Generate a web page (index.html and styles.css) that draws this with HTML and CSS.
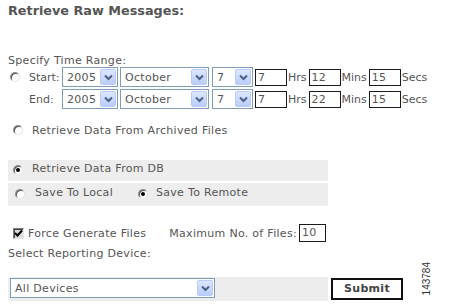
FILE: index.html
```html
<!DOCTYPE html>
<html>
<head>
<meta charset="utf-8">
<link rel="stylesheet" href="styles.css">
</head>
<body>
<div class="page">
  <h1 class="title">Retrieve Raw Messages:</h1>
  <div class="range-label">Specify Time Range:</div>
  <div class="time-rows">
    <div class="trow">
      <span class="radio-cell"><span class="radio"></span></span>
      <span class="tlabel">Start:</span>
      <div class="sel w-year"><span class="val">2005</span><span class="arr"><svg width="9" height="7" viewBox="0 0 9 7"><path d="M1 1.5 L4.5 5 L8 1.5" fill="none" stroke="#4d6185" stroke-width="2"/></svg></span></div>
      <div class="sel w-month"><span class="val">October</span><span class="arr"><svg width="9" height="7" viewBox="0 0 9 7"><path d="M1 1.5 L4.5 5 L8 1.5" fill="none" stroke="#4d6185" stroke-width="2"/></svg></span></div>
      <div class="sel w-day"><span class="val">7</span><span class="arr"><svg width="9" height="7" viewBox="0 0 9 7"><path d="M1 1.5 L4.5 5 L8 1.5" fill="none" stroke="#4d6185" stroke-width="2"/></svg></span></div>
      <span class="inp">7</span><span class="unit">Hrs</span>
      <span class="inp">12</span><span class="unit">Mins</span>
      <span class="inp">15</span><span class="unit">Secs</span>
    </div>
    <div class="trow">
      <span class="radio-cell"></span>
      <span class="tlabel">End:</span>
      <div class="sel w-year"><span class="val">2005</span><span class="arr"><svg width="9" height="7" viewBox="0 0 9 7"><path d="M1 1.5 L4.5 5 L8 1.5" fill="none" stroke="#4d6185" stroke-width="2"/></svg></span></div>
      <div class="sel w-month"><span class="val">October</span><span class="arr"><svg width="9" height="7" viewBox="0 0 9 7"><path d="M1 1.5 L4.5 5 L8 1.5" fill="none" stroke="#4d6185" stroke-width="2"/></svg></span></div>
      <div class="sel w-day"><span class="val">7</span><span class="arr"><svg width="9" height="7" viewBox="0 0 9 7"><path d="M1 1.5 L4.5 5 L8 1.5" fill="none" stroke="#4d6185" stroke-width="2"/></svg></span></div>
      <span class="inp">7</span><span class="unit">Hrs</span>
      <span class="inp">22</span><span class="unit">Mins</span>
      <span class="inp">15</span><span class="unit">Secs</span>
    </div>
  </div>

  <div class="opt archived"><span class="radio"></span><span class="otext">Retrieve Data From Archived Files</span></div>

  <div class="band band-db"><span class="radio checked"></span><span class="otext">Retrieve Data From DB</span></div>
  <div class="band band-save">
    <span class="radio"></span><span class="otext">Save To Local</span>
    <span class="radio checked r-remote"></span><span class="otext">Save To Remote</span>
  </div>

  <div class="force-row">
    <span class="check"><svg width="9" height="9" viewBox="0 0 9 9"><path d="M1 4 L3.5 6.5 L8 1.5" fill="none" stroke="#000" stroke-width="2"/></svg></span>
    <span class="force-text">Force Generate Files</span>
    <span class="max-text">Maximum No. of Files:</span>
    <span class="inp inp-max">10</span>
  </div>
  <div class="device-label">Select Reporting Device:</div>

  <div class="bottom">
    <div class="band band-device">
      <div class="sel w-device"><span class="val">All Devices</span><span class="arr"><svg width="9" height="7" viewBox="0 0 9 7"><path d="M1 1.5 L4.5 5 L8 1.5" fill="none" stroke="#4d6185" stroke-width="2"/></svg></span></div>
    </div>
    <div class="submit">Submit</div>
  </div>
</div>
<div class="figid">143784</div>
</body>
</html>
```

FILE: styles.css
```css
html, body {
  margin: 0;
  padding: 0;
  background: #fff;
}
body {
  font-family: "DejaVu Sans", Verdana, sans-serif;
  font-size: 11px;
  letter-spacing: 0.3px;
  color: #555;
  width: 460px;
  height: 306px;
  overflow: hidden;
  position: relative;
}
.page {
  padding-left: 8px;
}
.title {
  margin: 0;
  padding-top: 3px;
  font-size: 12.8px;
  letter-spacing: 0;
  line-height: 16px;
  font-weight: bold;
  color: #555;
}
.range-label {
  margin-top: 35px;
  line-height: 13px;
}
.time-rows {
  display: flex;
  flex-direction: column;
  gap: 2px;
}
.trow {
  display: flex;
  align-items: center;
  height: 20px;
}
.radio-cell {
  width: 21px;
  display: flex;
  align-items: center;
  padding-left: 2px;
  box-sizing: border-box;
}
.tlabel {
  width: 33px;
  letter-spacing: 0;
}
.radio {
  display: inline-block;
  width: 10px;
  height: 10px;
  box-sizing: border-box;
  border-radius: 50%;
  border: 1px solid;
  border-color: #8a8a8a #e4e4e4 #e4e4e4 #8a8a8a;
  background: #fff;
  box-shadow: inset 1px 1px 0 #505050;
  position: relative;
  flex: none;
}
.radio.checked::after {
  content: "";
  position: absolute;
  left: 2px;
  top: 2px;
  width: 4px;
  height: 4px;
  border-radius: 50%;
  background: #000;
}
.sel {
  display: flex;
  align-items: center;
  box-sizing: border-box;
  height: 20px;
  border: 1px solid #7f9db9;
  background: #fff;
  padding: 1px;
  color: #555;
}
.sel .val {
  flex: 1;
  padding-left: 3px;
  white-space: nowrap;
}
.sel .arr {
  width: 16px;
  height: 16px;
  box-sizing: border-box;
  border: 1px solid #b9cbf5;
  border-radius: 2px;
  background: linear-gradient(#dde7fe, #b8cdfa);
  display: flex;
  align-items: center;
  justify-content: center;
}
.w-year { width: 56px; margin-right: 2px; }
.w-month { width: 89px; margin-right: 3px; }
.w-day { width: 41px; margin-right: 2px; }
.w-device { width: 205px; height: 20px; }
.inp {
  display: inline-block;
  box-sizing: border-box;
  width: 32px;
  height: 17px;
  border: 1px solid #1a1a1a;
  line-height: 15px;
  padding-left: 2px;
  color: #555;
  background: #fff;
}
.unit {
  margin-left: 1px;
  margin-right: 2px;
  letter-spacing: 0;
}
.opt {
  display: flex;
  align-items: center;
}
.archived {
  margin-top: 14px;
  height: 14px;
  padding-left: 5px;
}
.otext {
  margin-left: 9px;
  line-height: 13px;
}
.band {
  background: #ededed;
  width: 320px;
  box-sizing: border-box;
  display: flex;
}
.band-db {
  margin-top: 23px;
  height: 21px;
  padding: 2px 0 0 5px;
  align-items: flex-start;
}
.band-db .radio { margin-top: 3px; }
.band-save {
  margin-top: 2px;
  height: 23px;
  padding: 3px 0 0 7px;
  align-items: flex-start;
}
.band-save .radio { margin-top: 3px; }
.band-save .otext { margin-left: 10px; }
.band-save .r-remote { margin-left: 25px; }
.band-save .r-remote + .otext { margin-left: 8px; }
.force-row {
  margin-top: 18px;
  height: 18px;
  display: flex;
  align-items: center;
  padding-left: 5px;
}
.check {
  width: 11px;
  height: 11px;
  box-sizing: border-box;
  border: 1px solid;
  border-color: #808080 #e8e8e8 #e8e8e8 #808080;
  box-shadow: inset 1px 1px 0 #404040;
  background: #dcdcdc;
  display: flex;
  align-items: center;
  justify-content: center;
}
.force-text { margin-left: 4px; }
.max-text { margin-left: 23px; }
.inp-max { margin-left: 2px; width: 27px; height: 18px; }
.device-label {
  margin-top: 5px;
  line-height: 13px;
}
.bottom {
  margin-top: 17px;
  display: flex;
  align-items: flex-start;
}
.band-device {
  height: 24px;
  padding: 1px 0 0 2px;
}
.submit {
  margin-left: 3px;
  margin-top: 1px;
  width: 72px;
  height: 22px;
  box-sizing: border-box;
  border: 2px solid #111;
  background: #fff;
  font-weight: bold;
  color: #444;
  text-align: center;
  line-height: 18px;
}
.figid {
  position: absolute;
  left: 421px;
  top: 262px;
  font-family: "Liberation Sans", Arial, sans-serif;
  font-size: 10px;
  letter-spacing: 0;
  color: #333;
  writing-mode: vertical-rl;
  transform: rotate(180deg);
  line-height: 11px;
}
```
